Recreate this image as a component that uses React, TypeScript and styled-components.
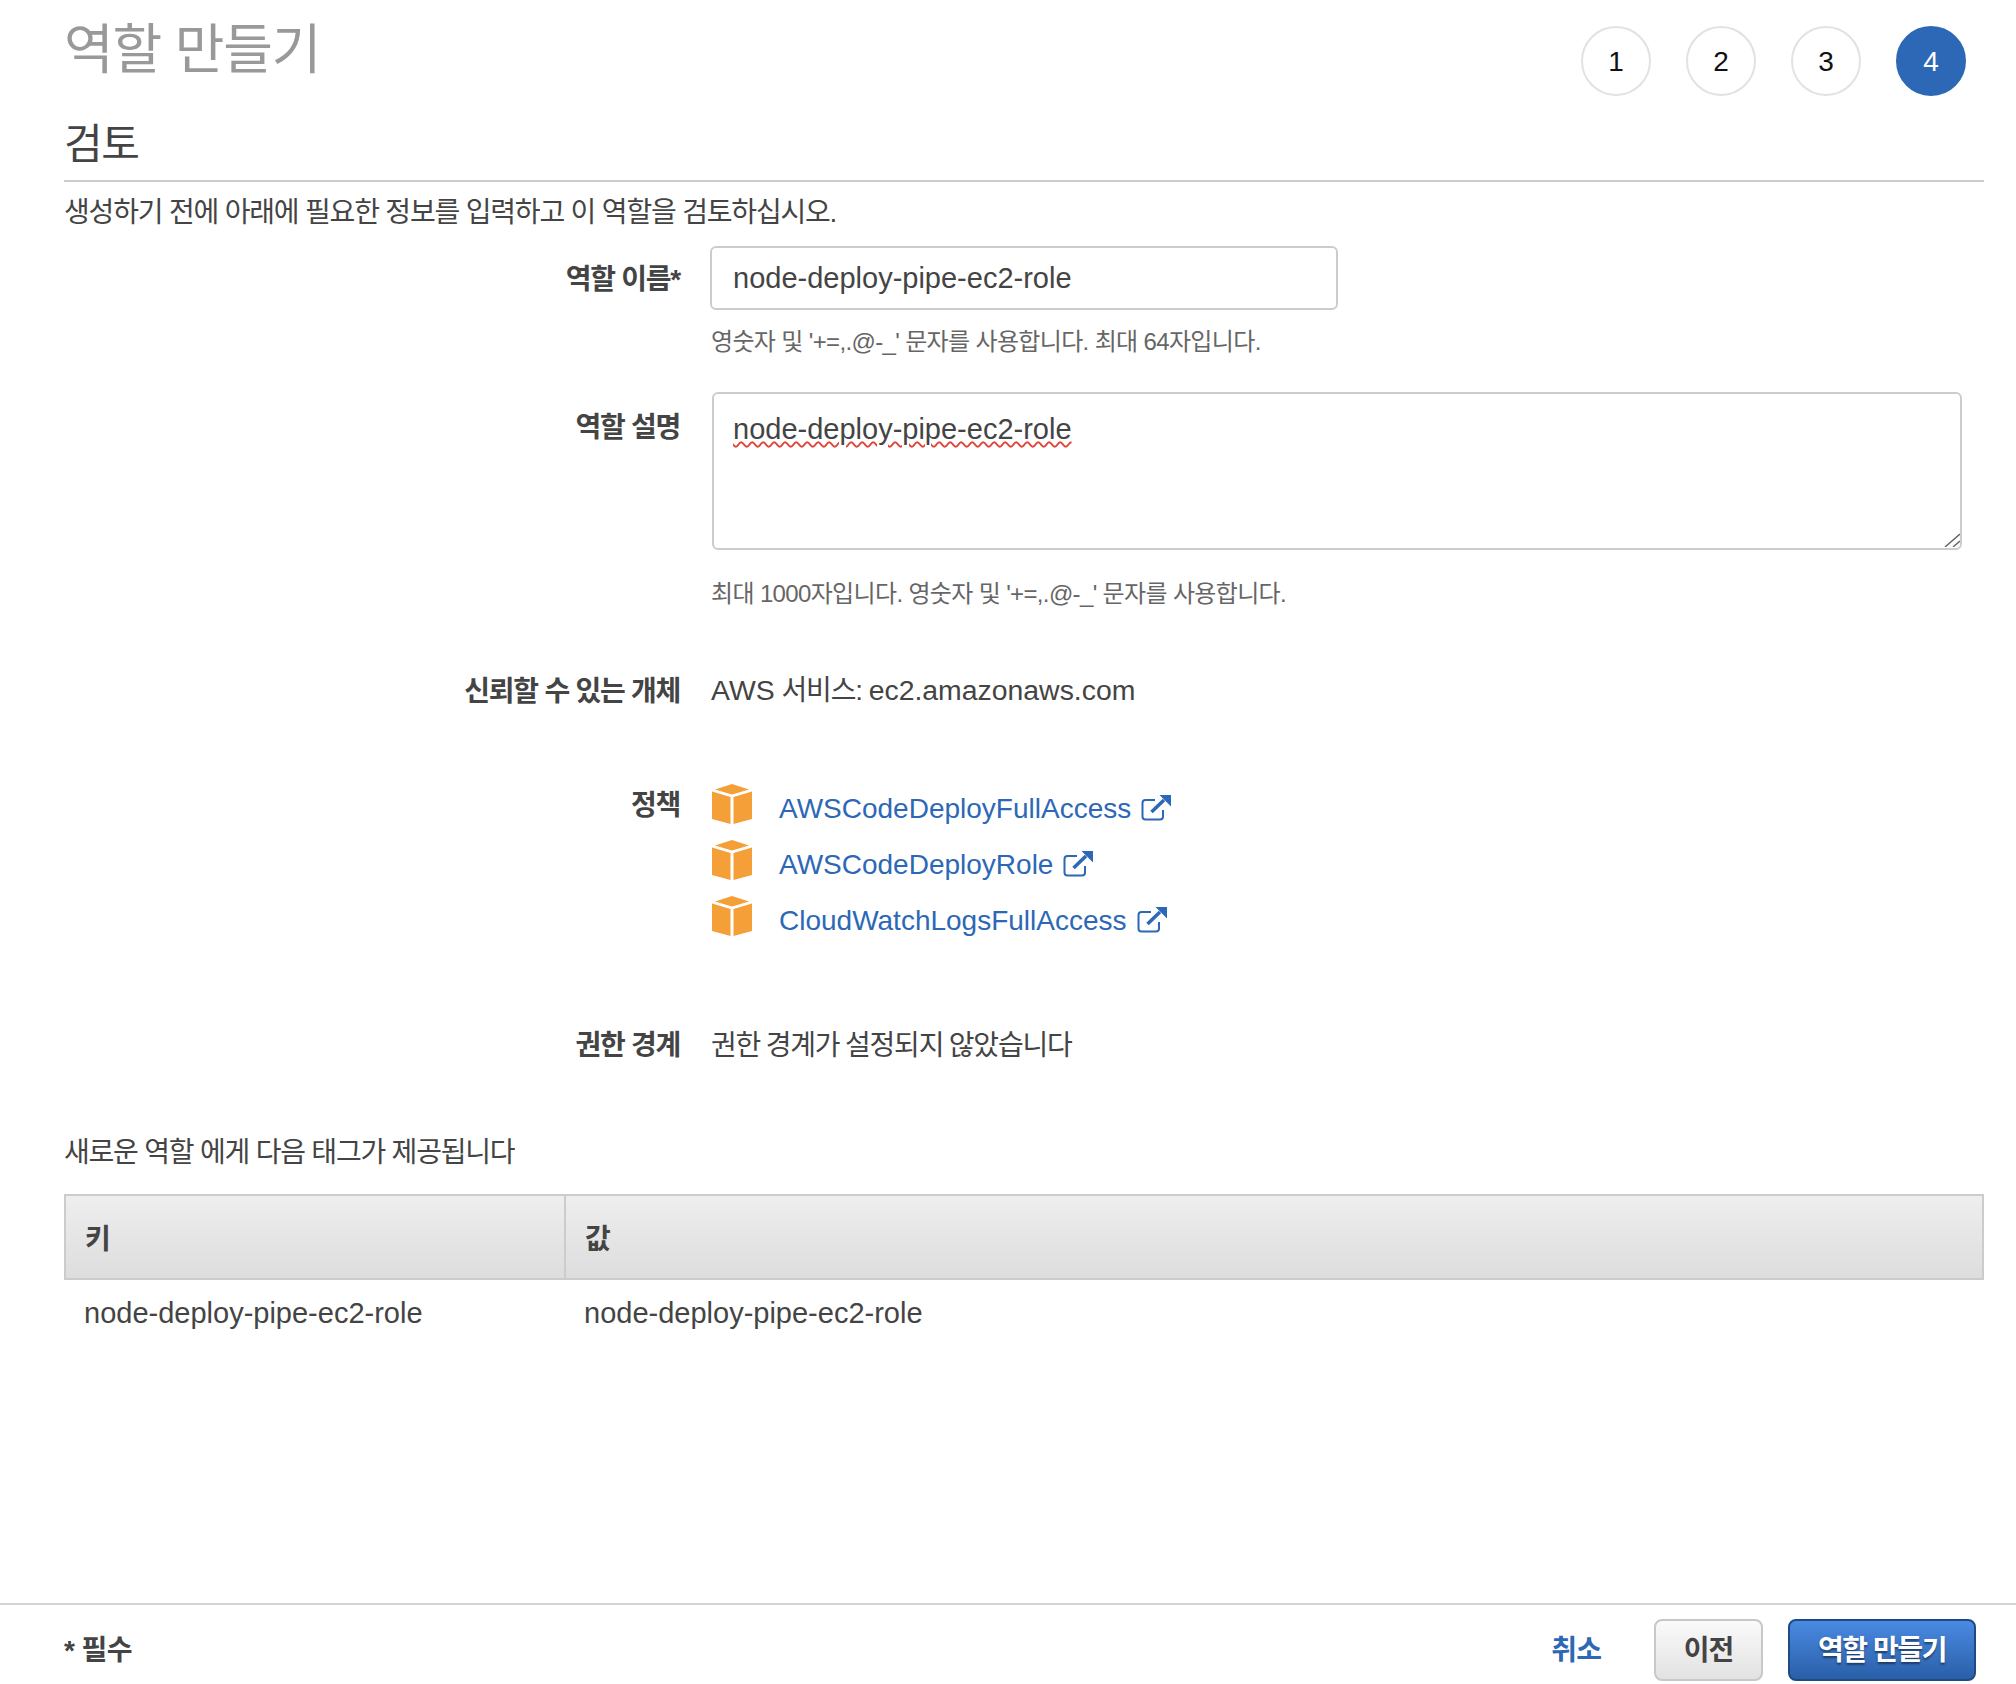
import React from 'react';
import styled, {createGlobalStyle} from 'styled-components';

const Global = createGlobalStyle`
  html, body { margin: 0; padding: 0; background: #fff; }
  body {
    font-family: "Liberation Sans", "Noto Sans CJK KR", sans-serif;
    font-size: 28px;
    color: #444;
  }
`;

const Page = styled.div`
  width: 2016px;
  height: 1684px;
  display: flex;
  flex-direction: column;
  overflow: hidden;
`;
const Main = styled.main`
  flex: 1;
  padding: 0 32px 0 64px;
`;
const TitleBar = styled.div`
  height: 92px;
  display: flex;
  justify-content: space-between;
`;
const Title = styled.h1`
  margin: 12px 0 0;
  font-size: 54px;
  line-height: 76px;
  font-weight: 400;
  letter-spacing: -1.2px;
  color: #999;
`;
const Steps = styled.ol`
  list-style: none;
  margin: 26px 18px 0 0;
  padding: 0;
  display: flex;
  gap: 35px;
  height: 70px;
`;
const Step = styled.li<{$active?: boolean}>`
  width: 70px;
  height: 70px;
  box-sizing: border-box;
  border-radius: 50%;
  border: 2px solid ${p => p.$active ? '#2d68b6' : '#e2e2e2'};
  background: ${p => p.$active ? '#2d68b6' : '#fff'};
  color: ${p => p.$active ? '#fff' : '#111'};
  font-size: 28px;
  padding-top: 2px;
  display: flex;
  align-items: center;
  justify-content: center;
`;
const SectionTitle = styled.h2`
  margin: 0;
  height: 90px;
  box-sizing: border-box;
  border-bottom: 2px solid #ccc;
  font-size: 42px;
  line-height: 60px;
  font-weight: 400;
  letter-spacing: -1.5px;
  color: #444;
  padding-top: 23px;
`;
const Intro = styled.p`
  margin: 14px 0 16px;
  font-size: 28px;
  line-height: 34px;
  letter-spacing: -1.18px;
`;
const Row = styled.div<{$gap: number}>`
  display: grid;
  grid-template-columns: 616px 1fr;
  column-gap: 31px;
  margin-bottom: ${p => p.$gap}px;
`;
const Label = styled.div<{$top?: number}>`
  padding-top: ${p => p.$top || 0}px;
  text-align: right;
  font-weight: 700;
  font-size: 28px;
  line-height: 36px;
  letter-spacing: -1.25px;
  color: #444;
`;
const NameInput = styled.input`
  display: block;
  width: 628px;
  height: 64px;
  margin-left: -1px;
  box-sizing: border-box;
  border: 2px solid #ccc;
  border-radius: 6px;
  padding: 0 21px;
  font: inherit;
  font-size: 29px;
  color: #444;
  outline: none;
`;
const DescBox = styled.div`
  position: relative;
  width: 1250px;
  margin: 0 0 29px 1px;
`;
const DescArea = styled.textarea`
  display: block;
  width: 100%;
  height: 158px;
  box-sizing: border-box;
  border: 2px solid #ccc;
  border-radius: 6px;
  padding: 17px 19px;
  font: inherit;
  font-size: 29px;
  line-height: 36px;
  color: #444;
  outline: none;
  resize: none;
  text-decoration: underline wavy #e0453a 2px;
  text-underline-offset: 2px;
`;
const Grip = styled.svg`
  position: absolute;
  right: 2px;
  bottom: 3px;
  color: #666;
`;
const Hint = styled.div<{$top?: number}>`
  margin-top: ${p => p.$top ?? 17}px;
  font-size: 24px;
  line-height: 30px;
  letter-spacing: -0.65px;
  color: #666;
`;
const Value = styled.div`
  font-size: 28.4px;
  line-height: 36px;
  word-spacing: -1px;
`;
const Ko = styled.span`
  font-size: 28px;
  letter-spacing: -1.2px;
`;
const PolicyList = styled.div`
  display: flex;
  flex-direction: column;
  gap: 16px;
  padding: 2px 0 0 1px;
`;
const Policy = styled.div`
  display: flex;
  align-items: center;
  height: 40px;
`;
const PolicyLink = styled.a`
  margin-left: 27px;
  margin-right: 10px;
  margin-top: 10px;
  color: #2d68b6;
  text-decoration: none;
  font-size: 28px;
  line-height: 36px;
`;
const LinkIcon = styled.svg`
  margin-top: 7px;
  color: #2d68b6;
`;
const TagCaption = styled.div`
  font-size: 28px;
  line-height: 34px;
  letter-spacing: -1.2px;
  margin-bottom: 24px;
`;
const Table = styled.table`
  width: 1920px;
  border-collapse: collapse;
  table-layout: fixed;
`;
const Th = styled.th<{$w?: number}>`
  ${p => p.$w ? `width: ${p.$w}px;` : ''}
  height: 84px;
  box-sizing: border-box;
  border: 2px solid #ccc;
  background: linear-gradient(#eeeeee, #dddddd);
  padding: 0 19px;
  text-align: left;
  font-size: 28px;
  font-weight: 700;
  color: #444;
`;
const Td = styled.td`
  height: 66px;
  padding: 0 19px;
  font-size: 29px;
`;
const Footer = styled.footer`
  height: 81px;
  box-sizing: border-box;
  border-top: 2px solid #d4d4d4;
  padding: 14px 40px 0 64px;
  display: flex;
  align-items: flex-start;
`;
const Required = styled.div`
  margin-right: auto;
  font-size: 28px;
  font-weight: 700;
  line-height: 64px;
  letter-spacing: -0.6px;
`;
const CancelLink = styled.a`
  margin-right: 53px;
  color: #2d68b6;
  font-size: 28px;
  font-weight: 700;
  line-height: 64px;
  letter-spacing: -0.9px;
`;
const Button = styled.button<{$primary?: boolean}>`
  height: 62px;
  box-sizing: border-box;
  border-radius: 8px;
  font-family: inherit;
  font-size: 28px;
  font-weight: 700;
  letter-spacing: ${p => p.$primary ? '-1.4px' : '-0.9px'};
  border: 2px solid ${p => p.$primary ? '#1e4a86' : '#c8c8c8'};
  color: ${p => p.$primary ? '#fff' : '#444'};
  background: ${p => p.$primary ? 'linear-gradient(#4a8ae2, #2a5fa8)' : 'linear-gradient(#fafafa, #e2e2e2)'};
  text-shadow: ${p => p.$primary ? '0 2px 2px rgba(0,0,0,.45)' : 'none'};
  padding: 0 0 4px;
`;
const PrevButton = styled(Button)`
  width: 109px;
  margin-right: 25px;
`;
const CreateButton = styled(Button)`
  width: 188px;
`;

const CubeIcon = () => (
  <svg width="40" height="40" viewBox="0 0 40 40" fill="#f49f37">
    <path d="M20 0 37 5.5 20 10.5 3 5.5Z"/>
    <path d="M0 7.5 18.500 13V40L0 35Z"/>
    <path d="M21.500 13 40 7.5V35L21.500 40Z"/>
  </svg>
);

const ExternalIcon = () => (
  <LinkIcon width="30" height="26" viewBox="0 0 30 26" fill="none">
    <path d="M14 5H4.500A3 3 0 0 0 1.500 8V21.500A3 3 0 0 0 4.500 24.500H19A3 3 0 0 0 22 21.500V15" stroke="currentColor" strokeWidth="2"/>
    <path d="M10.500 17 23 5" stroke="currentColor" strokeWidth="3.500"/>
    <path d="M18.500 0H30V11.500Z" fill="currentColor"/>
  </LinkIcon>
);

const policies = ['AWSCodeDeployFullAccess', 'AWSCodeDeployRole', 'CloudWatchLogsFullAccess'];
const roleName = 'node-deploy-pipe-ec2-role';

function App() {
  return (
    <Page>
      <Global/>
      <Main>
        <TitleBar>
          <Title>역할 만들기</Title>
          <Steps>
            <Step>1</Step>
            <Step>2</Step>
            <Step>3</Step>
            <Step $active>4</Step>
          </Steps>
        </TitleBar>
        <SectionTitle>검토</SectionTitle>
        <Intro>생성하기 전에 아래에 필요한 정보를 입력하고 이 역할을 검토하십시오.</Intro>

        <Row $gap={35}>
          <Label $top={16}>역할 이름*</Label>
          <div>
            <NameInput defaultValue={roleName} spellCheck={false}/>
            <Hint>영숫자 및 '+=,.@-_' 문자를 사용합니다. 최대 64자입니다.</Hint>
          </div>
        </Row>
        <Row $gap={63}>
          <Label $top={18}>역할 설명</Label>
          <div>
            <DescBox>
              <DescArea defaultValue={roleName} spellCheck={false}/>
              <Grip width="16" height="14" viewBox="0 0 16 14" stroke="currentColor" strokeWidth="1.500">
                <path d="M1 14 16 1M9 14 16 8"/>
              </Grip>
            </DescBox>
            <Hint $top={0}>최대 1000자입니다. 영숫자 및 '+=,.@-_' 문자를 사용합니다.</Hint>
          </div>
        </Row>
        <Row $gap={72}>
          <Label $top={2}>신뢰할 수 있는 개체</Label>
          <Value>AWS <Ko>서비스:</Ko> ec2.amazonaws.com</Value>
        </Row>
        <Row $gap={91}>
          <Label $top={6}>정책</Label>
          <PolicyList>
            {policies.map(name => <Policy key={name}>
              <CubeIcon/>
              <PolicyLink>{name}</PolicyLink>
              <ExternalIcon/>
            </Policy>)}
          </PolicyList>
        </Row>
        <Row $gap={72}>
          <Label $top={1}>권한 경계</Label>
          <Value><Ko>권한 경계가 설정되지 않았습니다</Ko></Value>
        </Row>

        <TagCaption>새로운 역할 에게 다음 태그가 제공됩니다</TagCaption>
        <Table>
          <thead>
            <tr>
              <Th $w={500}>키</Th>
              <Th>값</Th>
            </tr>
          </thead>
          <tbody>
            <tr>
              <Td>{roleName}</Td>
              <Td>{roleName}</Td>
            </tr>
          </tbody>
        </Table>
      </Main>
      <Footer>
        <Required>* 필수</Required>
        <CancelLink>취소</CancelLink>
        <PrevButton>이전</PrevButton>
        <CreateButton $primary>역할 만들기</CreateButton>
      </Footer>
    </Page>
  );
}

export default App;
